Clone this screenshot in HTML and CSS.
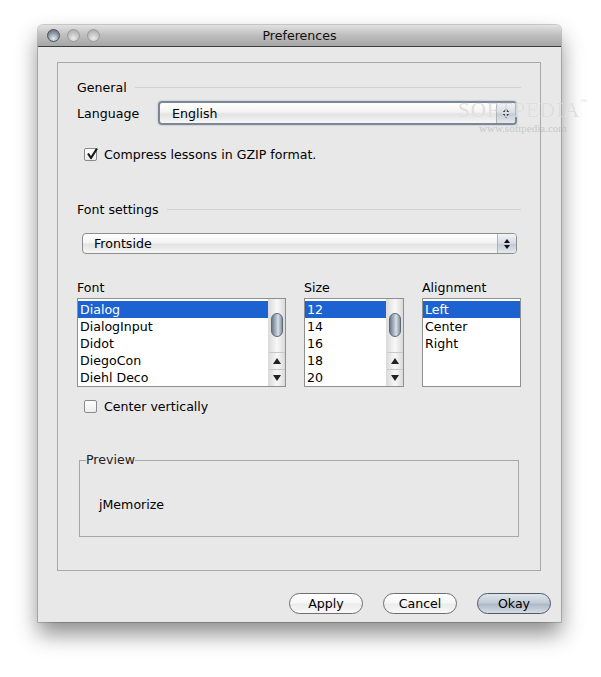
FILE: index.html
```html
<!DOCTYPE html>
<html>
<head>
<meta charset="utf-8">
<link rel="stylesheet" href="styles.css">
</head>
<body>
<div class="window">
  <div class="titlebar">
    <div class="lights">
      <span class="light close"></span>
      <span class="light"></span>
      <span class="light"></span>
    </div>
    <div class="title">Preferences</div>
  </div>
  <div class="content">
    <div class="panel">
      <div class="sect-head first"><span>General</span><span class="rule"></span></div>
      <div class="lang-row">
        <span class="lbl">Language</span>
        <div class="combo focused">
          <span class="combo-text">English</span>
          <span class="combo-btn"><svg width="8" height="12" viewBox="0 0 8 12"><path d="M4 1 L7 5 L1 5 Z M1 7 L7 7 L4 11 Z" fill="#111"/></svg></span>
        </div>
      </div>
      <div class="check-row gzip">
        <span class="cbox checked"><svg width="14" height="14" viewBox="0 0 14 14"><path d="M3 6.5 L6 11 L12 1.5" fill="none" stroke="#1a1a1a" stroke-width="2.2" stroke-linejoin="round"/></svg></span>
        <span>Compress lessons in GZIP format.</span>
      </div>
      <div class="sect-head fs"><span>Font settings</span><span class="rule"></span></div>
      <div class="combo wide">
        <span class="combo-text">Frontside</span>
        <span class="combo-btn"><svg width="8" height="12" viewBox="0 0 8 12"><path d="M4 1 L7 5 L1 5 Z M1 7 L7 7 L4 11 Z" fill="#111"/></svg></span>
      </div>
      <div class="lists">
        <div class="col col-font">
          <div class="col-lbl">Font</div>
          <div class="list">
            <div class="items">
              <div class="item sel">Dialog</div>
              <div class="item">DialogInput</div>
              <div class="item">Didot</div>
              <div class="item">DiegoCon</div>
              <div class="item">Diehl Deco</div>
            </div>
            <div class="sbar">
              <div class="track"><div class="thumb"></div></div>
              <div class="arrow up"><svg width="8" height="6" viewBox="0 0 8 6"><path d="M4 0 L8 6 L0 6 Z" fill="#222"/></svg></div>
              <div class="arrow down"><svg width="8" height="6" viewBox="0 0 8 6"><path d="M0 0 L8 0 L4 6 Z" fill="#222"/></svg></div>
            </div>
          </div>
        </div>
        <div class="col col-size">
          <div class="col-lbl">Size</div>
          <div class="list">
            <div class="items">
              <div class="item sel">12</div>
              <div class="item">14</div>
              <div class="item">16</div>
              <div class="item">18</div>
              <div class="item">20</div>
            </div>
            <div class="sbar">
              <div class="track"><div class="thumb"></div></div>
              <div class="arrow up"><svg width="8" height="6" viewBox="0 0 8 6"><path d="M4 0 L8 6 L0 6 Z" fill="#222"/></svg></div>
              <div class="arrow down"><svg width="8" height="6" viewBox="0 0 8 6"><path d="M0 0 L8 0 L4 6 Z" fill="#222"/></svg></div>
            </div>
          </div>
        </div>
        <div class="col col-align">
          <div class="col-lbl">Alignment</div>
          <div class="list">
            <div class="items">
              <div class="item sel">Left</div>
              <div class="item">Center</div>
              <div class="item">Right</div>
            </div>
          </div>
        </div>
      </div>
      <div class="check-row cv">
        <span class="cbox"></span>
        <span>Center vertically</span>
      </div>
      <fieldset class="preview">
        <legend>Preview</legend>
        <div class="preview-text">jMemorize</div>
      </fieldset>
    </div>
    <div class="buttons">
      <span class="btn">Apply</span>
      <span class="btn">Cancel</span>
      <span class="btn default">Okay</span>
    </div>
  </div>
  <div class="watermark">
    <div class="wm-big">SOFTPEDIA<sup>™</sup></div>
    <div class="wm-small">www.softpedia.com</div>
  </div>
</div>
</body>
</html>
```

FILE: styles.css
```css
html, body {
  margin: 0;
  padding: 0;
  background: #ffffff;
}
body {
  width: 601px;
  height: 677px;
  overflow: hidden;
  font-family: "DejaVu Sans", "Liberation Sans", sans-serif;
  font-size: 12.6px;
  color: #000;
}
.window {
  position: relative;
  margin: 25px 0 0 38px;
  width: 523px;
  height: 597px;
  background: #e8e8e8;
  border-radius: 5px 5px 0 0;
  box-shadow: 0 12px 22px rgba(0,0,0,0.45), 0 0 0 1px rgba(0,0,0,0.18);
  display: flex;
  flex-direction: column;
}
.titlebar {
  height: 21px;
  border-radius: 5px 5px 0 0;
  background: linear-gradient(#e2e2e2, #bdbdbd 50%, #a6a6a6);
  border-bottom: 1px solid #3e3e3e;
  display: flex;
  align-items: center;
  position: relative;
}
.lights {
  display: flex;
  gap: 7px;
  padding-left: 9px;
}
.light {
  width: 13px;
  height: 13px;
  border-radius: 50%;
  box-sizing: border-box;
  border: 1px solid #9a9a9a;
  background: radial-gradient(circle at 50% 75%, #eaeaea, #bdbdbd 60%, #a8a8a8);
}
.light.close {
  border-color: #4a505a;
  background: radial-gradient(circle at 50% 78%, #e4ecf5, #8d96a3 55%, #5c6572);
}
.title {
  position: absolute;
  left: 0;
  right: 0;
  top: 3px;
  text-align: center;
  font-size: 12.6px;
  color: #111;
}
.content {
  flex: 1;
  display: flex;
  flex-direction: column;
}
.panel {
  margin: 15px 0 0 19px;
  height: 507px;
  border: 1px solid #a9a9a9;
  padding: 0 19px 0 19px;
  box-sizing: content-box;
  width: 444px;
  display: flex;
  flex-direction: column;
}
.sect-head {
  display: flex;
  align-items: center;
  height: 16px;
  gap: 8px;
}
.sect-head.first { margin-top: 16px; }
.sect-head.fs { margin-top: 39px; }
.rule {
  flex: 1;
  height: 1px;
  background: #d2d2d2;
}
.lang-row {
  display: flex;
  align-items: center;
  margin-top: 6px;
  height: 24px;
}
.lbl { width: 81px; }
.combo {
  height: 21px;
  box-sizing: border-box;
  border: 1px solid #8e8e8e;
  border-radius: 4px;
  background: linear-gradient(#ffffff, #f4f4f4 45%, #e3e3e3 55%, #f6f6f6);
  display: flex;
  align-items: center;
  position: relative;
}
.combo.focused {
  width: 359px;
  height: 24px;
  border: 2px solid #7c8796;
  box-shadow: 0 0 2px #a0aab8;
}
.combo-text {
  flex: 1;
  padding-left: 12px;
}
.combo-btn {
  width: 18px;
  align-self: stretch;
  border-left: 1px solid #b0b0b0;
  border-radius: 0 3px 3px 0;
  background: linear-gradient(#f2f4f7, #d4dbe4 50%, #c2cbd7 55%, #e4e9ee);
  display: flex;
  align-items: center;
  justify-content: center;
}
.combo.wide {
  margin-top: 16px;
  margin-left: 5px;
  width: 435px;
}
.combo.wide .combo-text { padding-left: 11px; }
.check-row {
  display: flex;
  align-items: center;
  gap: 7px;
  margin-left: 7px;
  height: 16px;
}
.check-row.gzip { margin-top: 21px; }
.check-row.cv { margin-top: 11px; }
.cbox {
  width: 13px;
  height: 13px;
  box-sizing: border-box;
  border: 1px solid #8a8a8a;
  border-radius: 2px;
  background: linear-gradient(#ffffff, #ececec);
  position: relative;
}
.cbox svg {
  position: absolute;
  left: 0;
  top: -2px;
}
.lists {
  display: flex;
  margin-top: 26px;
}
.col-lbl {
  height: 16px;
  margin-bottom: 2px;
}
.col-font { width: 209px; margin-right: 18px; }
.col-size { width: 100px; margin-right: 18px; }
.col-align { width: 99px; }
.list {
  height: 89px;
  box-sizing: border-box;
  border: 1px solid #8f8f8f;
  background: #fff;
  display: flex;
  overflow: hidden;
}
.items {
  flex: 1;
  padding-top: 2px;
}
.item {
  height: 17px;
  line-height: 17px;
  padding-left: 2px;
}
.item.sel {
  background: #1c62d0;
  color: #fff;
}
.sbar {
  width: 16px;
  border-left: 1px solid #dcdcdc;
  display: flex;
  flex-direction: column;
  background: linear-gradient(90deg, #dcdcdc, #f8f8f8 50%, #dadada);
}
.track {
  flex: 1;
  position: relative;
}
.thumb {
  position: absolute;
  left: 2px;
  right: 2px;
  top: 14px;
  height: 22px;
  border-radius: 6px;
  border: 1px solid #5d6977;
  background: linear-gradient(90deg, #6d7b8c, #b8c3cf 45%, #d9e0e7 60%, #8593a3);
}
.arrow {
  height: 16px;
  display: flex;
  align-items: center;
  justify-content: center;
  border-top: 1px solid #c8c8c8;
}
.preview {
  margin: 40px 0 0 2px;
  padding: 0;
  width: 440px;
  height: 83px;
  box-sizing: border-box;
  border: 1px solid #a7a7a7;
  position: relative;
}
.preview legend {
  padding: 0;
  margin-left: 6px;
  font-size: 12.6px;
  line-height: 12px;
  color: #222;
}
.preview-text {
  margin: 31px 0 0 19px;
}
.buttons {
  display: flex;
  justify-content: flex-end;
  gap: 20px;
  margin: 22px 10px 0 0;
}
.btn {
  width: 74px;
  height: 21px;
  box-sizing: border-box;
  border: 1px solid #6e6e6e;
  border-radius: 11px;
  background: linear-gradient(#ffffff, #f7f7f7 45%, #ebebeb 55%, #f9f9f9);
  display: flex;
  align-items: center;
  justify-content: center;
  font-size: 12.6px;
}
.btn.default {
  border-color: #4f5966;
  background: linear-gradient(#dfe5ec, #c3ccd7 45%, #aeb9c7 55%, #d5dde6);
}
.watermark {
  position: absolute;
  left: 420px;
  top: 73px;
  color: rgba(210,210,210,0.7);
  font-family: "Liberation Serif", serif;
  pointer-events: none;
}
.wm-big {
  font-size: 21px;
  letter-spacing: 1px;
  text-shadow: 0 0 1px rgba(255,255,255,0.8);
}
.wm-big sup { font-size: 7px; vertical-align: top; }
.wm-small {
  font-size: 11px;
  margin-left: 21px;
  margin-top: -1px;
  color: rgba(190,190,190,0.8);
}
```
